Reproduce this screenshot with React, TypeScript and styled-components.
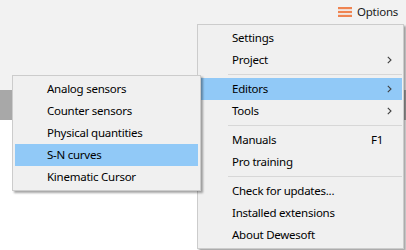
import React from "react";
import styled, { createGlobalStyle } from "styled-components";

const Global = createGlobalStyle`
  html, body { margin: 0; padding: 0; }
  body {
    width: 406px;
    height: 250px;
    overflow: hidden;
    background: #ffffff;
    font-family: "Noto Sans", "Open Sans", sans-serif;
    font-size: 11.5px;
    letter-spacing: -0.25px;
    color: #000;
  }
`;

const Page = styled.div`
  position: relative;
  width: 406px;
  height: 250px;
  display: flex;
  flex-direction: column;
`;

const Header = styled.div`
  height: 24px;
  background: #f2f2f2;
  display: flex;
  justify-content: flex-end;
  align-items: center;
  padding-right: 8px;
`;

const OptionsButton = styled.div`
  display: flex;
  align-items: center;
  gap: 5px;
  height: 24px;
  color: #1a1a1a;
  padding-bottom: 1px;
  box-sizing: border-box;
`;

const Toolbar = styled.div`
  height: 66px;
  background: #f2f2f2;
`;

const Band = styled.div`
  height: 30px;
  background: #a8a8a8;
`;

const Body = styled.div`
  flex: 1;
  background: #ffffff;
`;

const Menu = styled.div<{ $left: number; $top: number; $width: number; $padRight: number }>`
  position: absolute;
  left: ${(p) => p.$left}px;
  top: ${(p) => p.$top}px;
  width: ${(p) => p.$width}px;
  box-sizing: border-box;
  background: #f0f0f0;
  border: 1px solid #cccccc;
  padding: 2px ${(p) => p.$padRight}px 2px 2px;
  box-shadow: 2px 2px 2px rgba(0, 0, 0, 0.35);
  display: flex;
  flex-direction: column;
`;

const Row = styled.div<{ $active?: boolean }>`
  height: 22px;
  display: flex;
  align-items: center;
  padding-left: 32px;
  padding-right: 10px;
  background: ${(p) => (p.$active ? "#91c9f7" : "transparent")};
  white-space: nowrap;
`;

const Label = styled.span`
  flex: 1;
  line-height: 22px;
  padding-bottom: 1px;
`;

const Shortcut = styled.span`
  margin-right: 4px;
  line-height: 22px;
  padding-bottom: 1px;
`;

const ArrowSlot = styled.span`
  width: 5px;
  height: 8px;
  display: flex;
  align-items: center;
`;

const Separator = styled.div`
  height: 7px;
  display: flex;
  align-items: center;
  padding-left: 28px;
  &::after {
    content: "";
    flex: 1;
    height: 1px;
    background: #d7d7d7;
  }
`;

const Chevron = () => (
  <svg width="5" height="8" viewBox="0 0 5 8">
    <path d="M0.8 0.8 L4 4 L0.8 7.2" fill="none" stroke="#404040" strokeWidth="1.1" />
  </svg>
);

const Hamburger = () => (
  <svg width="14" height="10" viewBox="0 0 14 10">
    <rect x="0" y="0" width="14" height="2.2" fill="#ef8451" />
    <rect x="0" y="3.9" width="14" height="2.2" fill="#ef8451" />
    <rect x="0" y="7.8" width="14" height="2.2" fill="#ef8451" />
  </svg>
);

type Item = { label: string; arrow?: boolean; shortcut?: string; active?: boolean } | "sep";

const mainItems: Item[] = [
  { label: "Settings" },
  { label: "Project", arrow: true },
  "sep",
  { label: "Editors", arrow: true, active: true },
  { label: "Tools", arrow: true },
  "sep",
  { label: "Manuals", shortcut: "F1" },
  { label: "Pro training" },
  "sep",
  { label: "Check for updates..." },
  { label: "Installed extensions" },
  { label: "About Dewesoft" },
];

const subItems: Item[] = [
  { label: "Analog sensors" },
  { label: "Counter sensors" },
  { label: "Physical quantities" },
  { label: "S-N curves", active: true },
  { label: "Kinematic Cursor" },
];

const MenuList = ({ items }: { items: Item[] }) => (
  <>
    {items.map((it, i) =>
      it === "sep" ? (
        <Separator key={i} />
      ) : (
        <Row key={i} $active={it.active}>
          <Label>{it.label}</Label>
          {it.shortcut && <Shortcut>{it.shortcut}</Shortcut>}
          <ArrowSlot>{it.arrow && <Chevron />}</ArrowSlot>
        </Row>
      )
    )}
  </>
);

export default function App() {
  return (
    <Page>
      <Global />
      <Header>
        <OptionsButton>
          <Hamburger />
          <span>Options</span>
        </OptionsButton>
      </Header>
      <Toolbar />
      <Band />
      <Body />
      <Menu $left={197} $top={24} $width={207} $padRight={1}>
        <MenuList items={mainItems} />
      </Menu>
      <Menu $left={12} $top={75} $width={189} $padRight={2}>
        <MenuList items={subItems} />
      </Menu>
    </Page>
  );
}
